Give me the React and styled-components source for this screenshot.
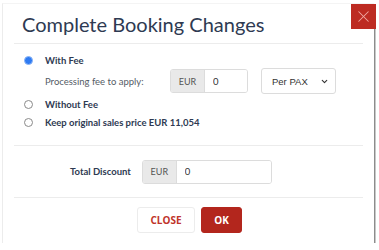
import { useState } from 'react';
import styled, { createGlobalStyle } from 'styled-components';
import { X, ChevronDown } from 'lucide-react';

const GlobalStyle = createGlobalStyle`
    body {
        margin: 0;
        background: #fff;
        font-family: Lato, "Open Sans", sans-serif;
    }
`;

const Page = styled.div`
    padding: 3px 0 0 2px;
`;

const Modal = styled.div`
    position: relative;
    width: 372px;
    height: 240px;
    box-sizing: border-box;
    padding: 0 11px;
    background: #fff;
    border-left: 1px solid #ececec;
    border-top: 1px solid #f4f4f4;
    box-shadow: 1px 1px 0 #8c8c8c, 2px 2px 0 #c8c8c8;
    display: flex;
    flex-direction: column;
`;

const CloseIcon = styled.button`
    position: absolute;
    top: 0;
    right: -2px;
    width: 25px;
    height: 25px;
    padding: 0;
    border: none;
    background: #bd2b22;
    color: #f0a9a3;
    display: flex;
    align-items: center;
    justify-content: center;
`;

const Header = styled.div`
    height: 39px;
    display: flex;
    align-items: center;
    padding-left: 8px;
    border-bottom: 1px solid #ececec;
`;

const Title = styled.h2`
    margin: 0;
    font-size: 20px;
    font-weight: 400;
    color: #2e3a52;
`;

const Options = styled.div`
    display: flex;
    flex-direction: column;
    padding: 9px 0 0 10px;
    height: 92px;
    border-bottom: 1px solid #ececec;
`;

const OptionRow = styled.label`
    display: flex;
    align-items: center;
    height: ${(p) => p.$h}px;
    gap: 12px;
    font-size: 9.5px;
    font-weight: 700;
    color: #2e3a52;
    cursor: pointer;
`;

const Radio = styled.span`
    width: 9px;
    height: 9px;
    border-radius: 50%;
    box-sizing: border-box;
    border: 1px solid ${(p) => (p.$on ? '#8db6f7' : '#8a8a8a')};
    background: ${(p) => (p.$on ? '#2f7bf2' : '#fff')};
    flex-shrink: 0;
`;

const FeeRow = styled.div`
    display: flex;
    align-items: center;
    height: 28px;
    padding-left: 21px;
`;

const FeeLabel = styled.span`
    width: 125px;
    font-size: 9.5px;
    color: #555c66;
`;

const InputGroup = styled.div`
    display: flex;
    width: ${(p) => p.$w}px;
    height: 24px;
    border: 1px solid #dcdcdc;
    border-radius: 3px;
    overflow: hidden;
    box-sizing: border-box;
`;

const Addon = styled.span`
    width: 33px;
    background: #e9e9e9;
    border-right: 1px solid #dcdcdc;
    display: flex;
    align-items: center;
    justify-content: center;
    font-size: 9px;
    color: #555;
`;

const TextInput = styled.input`
    flex: 1;
    min-width: 0;
    border: none;
    outline: none;
    padding: 0 8px;
    font-family: inherit;
    font-size: 9.5px;
    color: #333;
`;

const SelectWrap = styled.div`
    position: relative;
    margin-left: 13px;
    width: 75px;
    height: 26px;
`;

const Select = styled.select`
    appearance: none;
    width: 100%;
    height: 100%;
    border: 1px solid #dcdcdc;
    border-radius: 3px;
    background: #fff;
    padding: 0 0 0 10px;
    font-family: "Liberation Sans", Arial, sans-serif;
    font-size: 9.5px;
    color: #333;
`;

const Chevron = styled(ChevronDown)`
    position: absolute;
    right: 7px;
    top: 9px;
    pointer-events: none;
`;

const DiscountRow = styled.div`
    display: flex;
    align-items: center;
    height: 51px;
    padding-left: 56px;
    gap: 11px;
    border-bottom: 1px solid #ececec;
`;

const DiscountLabel = styled.span`
    font-size: 9.5px;
    font-weight: 700;
    color: #2e3a52;
`;

const Footer = styled.div`
    display: flex;
    justify-content: center;
    gap: 6px;
    padding: 9px 0 0 2px;
`;

const Button = styled.button`
    height: 26px;
    width: ${(p) => (p.$primary ? 41 : 58)}px;
    padding: 0;
    border-radius: 3px;
    border: 1px solid ${(p) => (p.$primary ? '#b3261d' : '#ececec')};
    background: ${(p) => (p.$primary ? '#b3261d' : '#fff')};
    color: ${(p) => (p.$primary ? '#fff' : '#c0342a')};
    font-family: "Open Sans", sans-serif;
    font-size: 10px;
    font-weight: 700;
    cursor: pointer;
`;

const App = () => {
    const [choice, setChoice] = useState('fee');
    const [fee, setFee] = useState('0');
    const [discount, setDiscount] = useState('0');

    return (
        <Page>
            <GlobalStyle />
            <Modal>
                <CloseIcon aria-label="Close"><X size={19} strokeWidth={1.3} /></CloseIcon>
                <Header>
                    <Title>Complete Booking Changes</Title>
                </Header>
                <Options>
                    <OptionRow $h={14} onClick={() => setChoice('fee')}>
                        <Radio $on={choice === 'fee'} />
                        With Fee
                    </OptionRow>
                    <FeeRow>
                        <FeeLabel>Processing fee to apply:</FeeLabel>
                        <InputGroup $w={78}>
                            <Addon>EUR</Addon>
                            <TextInput value={fee} onChange={(e) => setFee(e.target.value)} />
                        </InputGroup>
                        <SelectWrap>
                            <Select defaultValue="pax">
                                <option value="pax">Per PAX</option>
                                <option value="booking">Per Booking</option>
                            </Select>
                            <Chevron size={9} strokeWidth={3} color="#333" />
                        </SelectWrap>
                    </FeeRow>
                    <OptionRow $h={18} onClick={() => setChoice('nofee')}>
                        <Radio $on={choice === 'nofee'} />
                        Without Fee
                    </OptionRow>
                    <OptionRow $h={18} onClick={() => setChoice('keep')}>
                        <Radio $on={choice === 'keep'} />
                        Keep original sales price EUR 11,054
                    </OptionRow>
                </Options>
                <DiscountRow>
                    <DiscountLabel>Total Discount</DiscountLabel>
                    <InputGroup $w={130}>
                        <Addon>EUR</Addon>
                        <TextInput value={discount} onChange={(e) => setDiscount(e.target.value)} />
                    </InputGroup>
                </DiscountRow>
                <Footer>
                    <Button>CLOSE</Button>
                    <Button $primary>OK</Button>
                </Footer>
            </Modal>
        </Page>
    );
};

export default App;
